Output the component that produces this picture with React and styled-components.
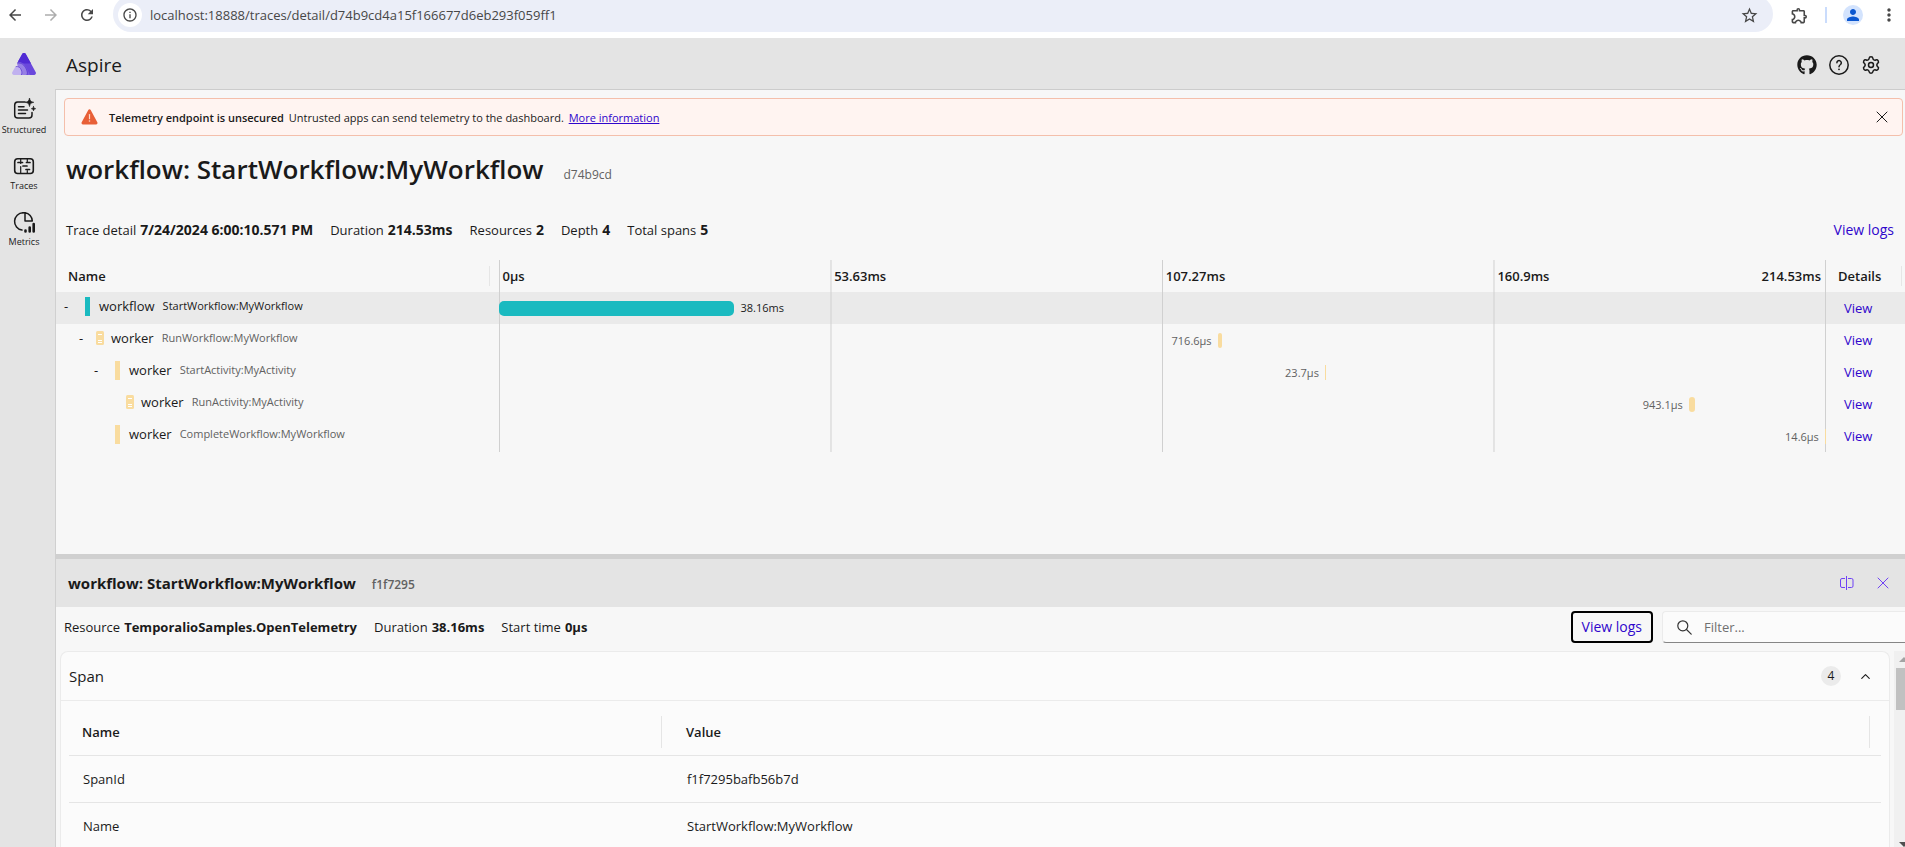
import React from "react";
import styled, { createGlobalStyle } from "styled-components";
import { MdArrowBack, MdArrowForward, MdRefresh, MdInfoOutline, MdStarOutline, MdOutlineExtension, MdPerson, MdMoreVert } from "react-icons/md";
import { FaGithub } from "react-icons/fa";
import { Settings, X, ChevronUp } from "lucide-react";

const color = {
  text: "#1a1a1a",
  muted: "#616161",
  link: "#2f06cc",
  chrome: "#e4e4e4",
  surface: "#f7f7f7",
  card: "#fbfbfb",
  line: "#d0d0d0",
  faint: "#e6e6e6",
  accent: "#6f42f5",
  teal: "#1abac0",
  sand: "#f9dc9f",
};

const GlobalStyle = createGlobalStyle`
  *, *::before, *::after { box-sizing: border-box; }
  body {
    margin: 0;
    color: ${color.text};
    font: 13px/20px "Open Sans", "Noto Sans", sans-serif;
  }
  a { color: ${color.link}; text-decoration: none; }
  button { padding: 0; border: 0; background: none; color: inherit; font: inherit; cursor: pointer; }
  svg { display: block; }
`;

const Page = styled.div`
  display: flex;
  flex-direction: column;
  height: 100vh;
  overflow: hidden;
`;

/* Browser toolbar */

const BrowserBar = styled.div`
  display: flex;
  flex: none;
  gap: 16px;
  height: 38px;
  padding: 0 6px 0 5px;
  overflow: hidden;
  background: #fff;
  color: #474747;
`;

const BrowserButton = styled.button`
  display: flex;
  align-items: center;
  justify-content: center;
  width: 20px;
  height: 30px;
  color: ${(p) => (p.disabled ? "#adadad" : "#474747")};
`;

const AddressBar = styled.div`
  display: flex;
  flex: 1;
  align-items: center;
  height: 36px;
  margin-top: -4px;
  padding: 2px 14px 0 5px;
  border-radius: 18px;
  background: #ebeef8;
`;

const SiteInfo = styled.button`
  display: flex;
  align-items: center;
  justify-content: center;
  width: 24px;
  height: 24px;
  border-radius: 50%;
  background: #fff;
`;

const AddressInput = styled.input`
  flex: 1;
  margin: 0 8px;
  padding: 0;
  border: 0;
  outline: 0;
  background: none;
  color: #474747;
  font: inherit;
`;

const BarDivider = styled.span`
  width: 2px;
  height: 16px;
  margin-top: 7px;
  background: #cadcfc;
`;

const Avatar = styled.button`
  display: flex;
  align-items: center;
  justify-content: center;
  width: 20px;
  height: 20px;
  margin-top: 5px;
  border-radius: 50%;
  background: #d3e3fd;
  color: #0b57d0;
`;

/* Application frame */

const AppFrame = styled.div`
  display: grid;
  flex: 1;
  grid-template: 51px minmax(0, 1fr) / 55px minmax(0, 1fr);
  min-height: 0;
  background: ${color.chrome};
`;

const LogoLink = styled.a`
  display: flex;
  align-items: center;
  justify-content: center;
  width: 48px;
`;

const AppHeader = styled.header`
  display: flex;
  align-items: center;
  justify-content: space-between;
  padding: 2px 24px 0 11px;
`;

const AppName = styled.span`
  font-size: 19px;
  line-height: 28px;
`;

const HeaderActions = styled.div`
  display: flex;
  gap: 12px;
`;

const IconButton = styled.button`
  display: flex;
  align-items: center;
  justify-content: center;
  width: 20px;
  height: 20px;
  color: ${(p) => (p.$accent ? color.accent : color.text)};
`;

const SideNav = styled.nav`
  width: 48px;
  padding-top: 9px;
`;

const NavItem = styled.a`
  display: flex;
  flex-direction: column;
  align-items: center;
  height: 56px;
  color: ${color.text};
  font-size: 9px;
  line-height: 15px;
`;

const Panels = styled.div`
  display: grid;
  grid-template-rows: minmax(0, 29fr) 5px minmax(0, 18fr);
  border-top: 1px solid #cccccc;
  border-left: 1px solid ${color.line};
  background: ${color.surface};
`;

const TracePanel = styled.main`
  overflow: hidden;
`;

/* Message bar */

const MessageBar = styled.div`
  display: flex;
  align-items: center;
  height: 38px;
  margin: 8px 2px 0 8px;
  padding: 0 10px 0 16px;
  border: 1px solid #f4bfab;
  border-radius: 4px;
  background: #fff4f1;
  font-size: 11px;
`;

const MessageText = styled.p`
  flex: 1;
  margin: 0 0 0 11px;
  padding-top: 2px;

  b { margin-right: 2px; font-weight: 600; }
  a { margin-left: 2px; text-decoration: underline; }
`;

/* Titles and summaries */

const TitleRow = styled.div`
  display: flex;
  align-items: baseline;
  gap: 20px;
  margin: 15px 10px 33px;
`;

const TraceTitle = styled.h1`
  margin: 0;
  font-size: 26px;
  font-weight: 600;
  line-height: 36px;
`;

const IdText = styled.span`
  color: ${color.muted};
  font-size: 12px;
  font-weight: ${(p) => (p.$strong ? 600 : 400)};
`;

const TraceSummary = styled.div`
  display: flex;
  justify-content: space-between;
  margin: 0 11px 20px 10px;
`;

const Facts = styled.dl`
  display: flex;
  gap: 17px;
  margin: 0;

  div { display: flex; align-items: baseline; gap: 4px; }
  dd { margin: 0; font-size: ${(p) => (p.$large ? 14 : 13)}px; font-weight: 700; }
`;

/* Trace table */

const TraceTable = styled.table`
  display: block;
  width: 100%;

  thead, tbody { display: block; }
`;

const TraceRow = styled.tr`
  display: grid;
  grid-template-columns: 2fr 6fr 79px;
  height: 32px;
  background: ${(p) => (p.$selected ? "#eaeaea" : "transparent")};
`;

const TraceHead = styled.th`
  display: flex;
  align-items: center;
  justify-content: space-between;
  padding: 0 ${(p) => (p.$last ? 3 : 9)}px 0 12px;
  font-weight: 600;
  text-align: left;

  &::after {
    width: 1px;
    height: 20px;
    background: ${color.faint};
    content: "";
  }
`;

const gridLines = `
  border-right: 1px solid ${color.line};
  background: linear-gradient(to right, ${color.line} 1px, transparent 1px) 0 0 / 25% 100%;
`;

const TickHead = styled.th`
  display: grid;
  grid-template-columns: repeat(4, 1fr);
  align-items: center;
  padding: 0;
  font-weight: 600;
  text-align: left;
  ${gridLines}
`;

const Tick = styled.span`
  display: flex;
  justify-content: space-between;
  padding: 0 4px;
`;

const NameCell = styled.td`
  display: flex;
  align-items: center;
  padding: 0 0 4px ${(p) => 8 + p.$depth * 15}px;
`;

const Toggle = styled.button`
  width: 6px;
  text-align: left;
`;

const TypeMark = styled.span`
  display: flex;
  justify-content: ${(p) => (p.$server ? "flex-end" : "flex-start")};
  width: ${(p) => (p.$server ? 19 : 14)}px;
  margin-left: ${(p) => (p.$server ? 0 : 15)}px;
  margin-right: ${(p) => (p.$server ? 7 : 0)}px;
`;

const ClientMark = styled.i`
  width: 5px;
  height: 19px;
  background: ${(p) => p.$color};
`;

const ResourceName = styled.span`
  margin-right: 8px;
`;

const SpanName = styled.span`
  color: ${(p) => (p.$selected ? color.text : color.muted)};
  font-size: 11px;
`;

const TimelineCell = styled.td`
  display: flex;
  align-items: center;
  padding: 0;
  ${gridLines}
`;

const Offset = styled.div`
  flex: none;
  text-align: right;
`;

const Bar = styled.div`
  flex: none;
  min-width: 1px;
  height: 15px;
  border-radius: ${(p) => (p.$thin ? 0 : 5)}px;
  background: ${(p) => p.$color};
`;

const DurationLabel = styled.span`
  padding: 0 6px;
  color: ${(p) => (p.$selected ? color.text : color.muted)};
  font-size: 11px;
`;

const DetailCell = styled.td`
  display: flex;
  align-items: center;
  padding: 0 0 0 18px;
`;

/* Span details */

const Splitter = styled.div`
  background: ${color.line};
`;

const DetailPanel = styled.section`
  display: flex;
  flex-direction: column;
  min-height: 0;
  overflow: hidden;
`;

const DetailHeader = styled.header`
  display: flex;
  flex: none;
  align-items: center;
  gap: 16px;
  height: 48px;
  padding: 0 12px;
  background: ${color.chrome};
`;

const DetailTitle = styled.div`
  display: flex;
  flex: 1;
  align-items: baseline;
  gap: 16px;
  padding-top: 2px;

  h2 { margin: 0; font-size: 15px; font-weight: 700; line-height: 20px; }
`;

const DetailToolbar = styled.div`
  display: flex;
  flex: none;
  align-items: center;
  gap: 9px;
  height: 44px;
  padding: 4px 0 8px 8px;

  dl { flex: 1; }
`;

const LogsLink = styled.a`
  font-size: 14px;
`;

const FocusedLogsLink = styled(LogsLink)`
  padding: 4px 9px;
  border: 2px solid #000;
  border-radius: 4px;
`;

const FilterBox = styled.label`
  display: flex;
  align-items: center;
  gap: 12px;
  width: 243px;
  height: 32px;
  padding-left: 14px;
  border: 1px solid #ebebeb;
  border-right: 0;
  border-bottom-color: #858585;
  border-radius: 4px 0 0 4px;
  background: ${color.card};

  input {
    flex: 1;
    min-width: 0;
    border: 0;
    outline: 0;
    padding: 0;
    background: none;
    font: inherit;
  }
  input::placeholder { color: #707070; opacity: 1; }
`;

const ScrollArea = styled.div`
  display: flex;
  flex: 1;
  min-height: 0;
  gap: 4px;
  padding-left: 4px;
`;

const Card = styled.div`
  flex: 1;
  overflow: hidden;
  border: 1px solid #ebebeb;
  border-bottom: 0;
  border-radius: 8px 8px 0 0;
  background: ${color.card};
`;

const CardHeader = styled.div`
  display: flex;
  align-items: center;
  height: 49px;
  padding: 0 14px 0 8px;
  border-bottom: 1px solid #ebebeb;

  h3 { flex: 1; margin: 0; font-size: 15px; font-weight: 500; }
`;

const Badge = styled.span`
  width: 20px;
  margin-right: 14px;
  border-radius: 10px;
  background: #ebebeb;
  font-size: 12px;
  text-align: center;
`;

const PropertyTable = styled.table`
  display: block;
  margin: 8px;

  thead, tbody { display: block; }
`;

const PropertyRow = styled.tr`
  display: grid;
  grid-template-columns: 1fr 2fr;
  align-items: center;
  height: 47px;
  border-bottom: 1px solid #e5e5e5;
`;

const PropertyHead = styled.th`
  padding: 6px 0 6px 13px;
  margin-right: 11px;
  border-right: 1px solid #e5e5e5;
  font-weight: 600;
  text-align: left;
`;

const PropertyCell = styled.td`
  padding: 0 14px;
`;

const Scrollbar = styled.div`
  display: flex;
  flex-direction: column;
  flex: none;
  width: 11px;
  padding: 6px 0 0 2px;
  overflow: hidden;
  background: #f0f0f0;
`;

const ScrollArrow = styled.span`
  display: block;
  width: 0;
  margin-left: 3px;
  border: 5px solid transparent;
  border-top: 0;
  border-bottom: 5px solid #a3a3a3;
  ${(p) => p.$down && "margin-top: auto; transform: rotate(180deg); border-bottom-color: #505050;"}
`;

const ScrollThumb = styled.span`
  height: 42px;
  margin-top: 6px;
  background: #c1c1c1;
`;

/* Drawings */

const AspireLogo = () => (
  <svg width="24" height="22" viewBox="0 0 24 22" aria-hidden="true">
    <path d="M10.2 1.1a2 2 0 0 1 3.6 0l9.8 17.8a2 2 0 0 1-1.8 3.1H12L6 8.6z" fill="#6a48dc" />
    <path d="M10.2 1.1a2 2 0 0 1 3.6 0L19 10.500H11L5 10.500z" fill="#512bd4" />
    <path d="M6 8.7C10 9 12.500 11 14 14l4 8h-6z" fill="#7b5de0" />
    <path d="M5 10.500c4-.6 6.500.5 8.500 4.500 1.500 3 2 7 .5 7H8z" fill="#9780e5" />
    <path d="M3.500 13.500c3-.5 4.500.8 5.500 3 1.200 2.700 1 5.500-.5 5.500H2.200a2 2 0 0 1-1.800-3.100z" fill="#c0b1ef" />
    <path d="M5.500 10c4-.2 6.500 1.600 8.500 5.500 1.400 2.800 2 4.500 1 6.500M3.800 13.500c2.800-.2 4.500 1 5.500 3.500.8 2 .8 3.500 0 5" fill="none" stroke="#5a36d2" strokeWidth=".7" />
  </svg>
);

const StructuredIcon = () => (
  <svg width="24" height="24" viewBox="0 0 24 24" fill="none" stroke="currentColor" strokeWidth="1.500" strokeLinecap="round" aria-hidden="true">
    <path d="M13 4H5.500A3 3 0 0 0 2.700 7v10a3 3 0 0 0 3 3H17a3 3 0 0 0 3-3v-2.500M6.500 8.700H12M6.500 12h9M6.500 15.500h7" />
    <path d="M17.500 0c.6 3 1.300 3.700 4.300 4.300-3 .6-3.700 1.300-4.300 4.300-.6-3-1.300-3.700-4.300-4.300 3-.6 3.700-1.300 4.300-4.300zM21.500 8.500c.3 1.500.7 1.800 2.200 2.200-1.500.3-1.900.7-2.200 2.200-.3-1.500-.7-1.900-2.200-2.200 1.500-.4 1.900-.7 2.200-2.200z" fill="currentColor" strokeWidth=".6" />
  </svg>
);

const TracesIcon = () => (
  <svg width="24" height="24" viewBox="0 0 24 24" fill="none" stroke="currentColor" strokeWidth="1.600" strokeLinecap="round" aria-hidden="true">
    <rect x="2.700" y="4.700" width="18.600" height="14.800" rx="3" />
    <path d="M8.700 5v4.500M8.700 12.500V19M15.300 5v2.500M15.300 16.500V19" strokeWidth="1.200" />
    <path d="M6 8.500h4.500M11 12h4M14.500 8.500H18M14 15.500h3.500" strokeWidth="1.700" />
  </svg>
);

const MetricsIcon = () => (
  <svg width="24" height="24" viewBox="0 0 24 24" fill="none" stroke="currentColor" strokeWidth="1.500" strokeLinecap="round" aria-hidden="true">
    <path d="M11 2.800a8.700 8.700 0 0 0-1 17.300M13 2.800V11h7.300A8.500 8.500 0 0 0 13 2.800z" strokeLinejoin="round" />
    <path d="M11 2.800h2" />
    <path d="M13.500 20.500v1M17.700 17.500v4M21.700 14v7.500" strokeWidth="2.600" />
  </svg>
);

const HelpIcon = () => (
  <svg width="20" height="20" viewBox="0 0 20 20" fill="none" stroke="currentColor" strokeWidth="1.500" strokeLinecap="round" aria-hidden="true">
    <circle cx="10" cy="10" r="9.200" />
    <path d="M7.900 7.800a2.200 2.200 0 1 1 3.600 1.700c-.9.700-1.500 1.200-1.500 2.200" />
    <circle cx="10" cy="14.300" r=".9" fill="currentColor" stroke="none" />
  </svg>
);

const WarningIcon = () => (
  <svg width="17" height="16" viewBox="0 0 17 16" aria-hidden="true">
    <path d="M7.300 1a1.400 1.400 0 0 1 2.400 0l6.600 12.300A1.400 1.400 0 0 1 15.100 15.400H1.900A1.400 1.400 0 0 1 .7 13.300z" fill="#e85f37" />
    <path d="M8.500 5.500v4.200" stroke="#fbd9cc" strokeWidth="1.200" strokeLinecap="round" />
    <circle cx="8.500" cy="12" r=".8" fill="#fbd9cc" />
  </svg>
);

const SplitIcon = () => (
  <svg width="14" height="14" viewBox="0 0 14 14" fill="none" stroke="currentColor" aria-hidden="true">
    <path d="M6.500 0v14M5 2.500H2A1.500 1.500 0 0 0 .5 4v6A1.500 1.500 0 0 0 2 11.500h3M8 2.500h3.500A1.500 1.500 0 0 1 13 4v6a1.500 1.500 0 0 1-1.500 1.500H8" />
  </svg>
);

const SearchIcon = () => (
  <svg width="15" height="15" viewBox="0 0 15 15" fill="none" stroke="#333" strokeWidth="1.200" strokeLinecap="round" aria-hidden="true">
    <circle cx="5.800" cy="5.800" r="5" />
    <path d="m9.500 9.500 4.700 4.700" />
  </svg>
);

const ServerIcon = ({ fill }) => (
  <svg width="8" height="14" viewBox="0 0 8 14" aria-hidden="true">
    <rect width="8" height="14" rx="1.500" fill={fill} />
    <path d="M2 3.500h4M2 9.500h4M2 11.500h4" stroke="#fff" />
  </svg>
);

/* Data */

const TOTAL = 214.53;
const ticks = ["0μs", "53.63ms", "107.27ms", "160.9ms"];

const spans = [
  { depth: 0, resource: "workflow", name: "StartWorkflow:MyWorkflow", start: 0, length: 38.16, label: "38.16ms", color: color.teal, toggle: true, selected: true },
  { depth: 1, resource: "worker", name: "RunWorkflow:MyWorkflow", start: 116.3, length: 0.7166, label: "716.6μs", color: color.sand, toggle: true, server: true },
  { depth: 2, resource: "worker", name: "StartActivity:MyActivity", start: 133.65, length: 0.0237, label: "23.7μs", color: color.sand, toggle: true },
  { depth: 3, resource: "worker", name: "RunActivity:MyActivity", start: 192.5, length: 0.9431, label: "943.1μs", color: color.sand, server: true },
  { depth: 2, resource: "worker", name: "CompleteWorkflow:MyWorkflow", start: 214.51, length: 0.0146, label: "14.6μs", color: color.sand },
];

const properties = [
  ["SpanId", "f1f7295bafb56b7d"],
  ["Name", "StartWorkflow:MyWorkflow"],
];

const percent = (value) => `${(value / TOTAL) * 100}%`;

function FactList({ items, large }) {
  return (
    <Facts $large={large}>
      {items.map(([term, value]) => (
        <div key={term}>
          <dt>{term}</dt>
          <dd>{value}</dd>
        </div>
      ))}
    </Facts>
  );
}

function SpanRow({ span }) {
  const labelFirst = span.start > TOTAL / 2;
  const label = <DurationLabel $selected={span.selected}>{span.label}</DurationLabel>;
  return (
    <TraceRow $selected={span.selected}>
      <NameCell $depth={span.depth}>
        <Toggle aria-label={span.toggle ? undefined : "No child spans"} disabled={!span.toggle}>
          {span.toggle ? "-" : ""}
        </Toggle>
        <TypeMark $server={span.server}>
          {span.server ? <ServerIcon fill={span.color} /> : <ClientMark $color={span.color} />}
        </TypeMark>
        <ResourceName>{span.resource}</ResourceName>
        <SpanName $selected={span.selected}>{span.name}</SpanName>
      </NameCell>
      <TimelineCell>
        <Offset style={{ width: percent(span.start) }}>{labelFirst && label}</Offset>
        <Bar $color={span.color} $thin={span.length < 0.1} style={{ width: percent(span.length) }} />
        {!labelFirst && label}
      </TimelineCell>
      <DetailCell>
        <a href="#span">View</a>
      </DetailCell>
    </TraceRow>
  );
}

export default function App() {
  return (
    <Page>
      <GlobalStyle />
      <BrowserBar>
        <BrowserButton aria-label="Back"><MdArrowBack size={18} /></BrowserButton>
        <BrowserButton aria-label="Forward" disabled><MdArrowForward size={18} /></BrowserButton>
        <BrowserButton aria-label="Reload"><MdRefresh size={18} /></BrowserButton>
        <AddressBar>
          <SiteInfo aria-label="Site information"><MdInfoOutline size={16} /></SiteInfo>
          <AddressInput aria-label="Address" defaultValue="localhost:18888/traces/detail/d74b9cd4a15f166677d6eb293f059ff1" />
          <BrowserButton aria-label="Bookmark"><MdStarOutline size={19} /></BrowserButton>
        </AddressBar>
        <BrowserButton aria-label="Extensions"><MdOutlineExtension size={19} /></BrowserButton>
        <BarDivider />
        <Avatar aria-label="Profile"><MdPerson size={18} /></Avatar>
        <BrowserButton aria-label="Menu"><MdMoreVert size={20} /></BrowserButton>
      </BrowserBar>

      <AppFrame>
        <LogoLink href="#home" aria-label="Home"><AspireLogo /></LogoLink>
        <AppHeader>
          <AppName>Aspire</AppName>
          <HeaderActions>
            <IconButton aria-label="GitHub"><FaGithub size={20} /></IconButton>
            <IconButton aria-label="Help"><HelpIcon /></IconButton>
            <IconButton aria-label="Settings"><Settings size={22} strokeWidth={1.8} /></IconButton>
          </HeaderActions>
        </AppHeader>

        <SideNav>
          <NavItem href="#structured"><StructuredIcon />Structured</NavItem>
          <NavItem href="#traces"><TracesIcon />Traces</NavItem>
          <NavItem href="#metrics"><MetricsIcon />Metrics</NavItem>
        </SideNav>

        <Panels>
          <TracePanel>
            <MessageBar>
              <WarningIcon />
              <MessageText>
                <b>Telemetry endpoint is unsecured</b> Untrusted apps can send telemetry to the dashboard.{" "}
                <a href="#more">More information</a>
              </MessageText>
              <IconButton aria-label="Dismiss"><X size={20} strokeWidth={1.2} /></IconButton>
            </MessageBar>

            <TitleRow>
              <TraceTitle>workflow: StartWorkflow:MyWorkflow</TraceTitle>
              <IdText>d74b9cd</IdText>
            </TitleRow>

            <TraceSummary>
              <FactList
                large
                items={[
                  ["Trace detail", "7/24/2024 6:00:10.571 PM"],
                  ["Duration", "214.53ms"],
                  ["Resources", "2"],
                  ["Depth", "4"],
                  ["Total spans", "5"],
                ]}
              />
              <LogsLink href="#logs">View logs</LogsLink>
            </TraceSummary>

            <TraceTable>
              <thead>
                <TraceRow>
                  <TraceHead>Name</TraceHead>
                  <TickHead>
                    {ticks.map((tick, i) => (
                      <Tick key={tick}>
                        <span>{tick}</span>
                        {i === ticks.length - 1 && <span>214.53ms</span>}
                      </Tick>
                    ))}
                  </TickHead>
                  <TraceHead $last>Details</TraceHead>
                </TraceRow>
              </thead>
              <tbody>
                {spans.map((span) => (
                  <SpanRow key={span.name} span={span} />
                ))}
              </tbody>
            </TraceTable>
          </TracePanel>

          <Splitter />

          <DetailPanel>
            <DetailHeader>
              <DetailTitle>
                <h2>workflow: StartWorkflow:MyWorkflow</h2>
                <IdText $strong>f1f7295</IdText>
              </DetailTitle>
              <IconButton $accent aria-label="Split vertically"><SplitIcon /></IconButton>
              <IconButton $accent aria-label="Close"><X size={20} strokeWidth={1.2} /></IconButton>
            </DetailHeader>

            <DetailToolbar>
              <FactList
                items={[
                  ["Resource", "TemporalioSamples.OpenTelemetry"],
                  ["Duration", "38.16ms"],
                  ["Start time", "0μs"],
                ]}
              />
              <FocusedLogsLink href="#span-logs">View logs</FocusedLogsLink>
              <FilterBox>
                <SearchIcon />
                <input type="search" placeholder="Filter..." aria-label="Filter" />
              </FilterBox>
            </DetailToolbar>

            <ScrollArea>
              <Card>
                <CardHeader>
                  <h3>Span</h3>
                  <Badge>4</Badge>
                  <IconButton aria-label="Collapse"><ChevronUp size={15} strokeWidth={1.8} /></IconButton>
                </CardHeader>
                <PropertyTable>
                  <thead>
                    <PropertyRow>
                      <PropertyHead>Name</PropertyHead>
                      <PropertyHead>Value</PropertyHead>
                    </PropertyRow>
                  </thead>
                  <tbody>
                    {properties.map(([name, value]) => (
                      <PropertyRow key={name}>
                        <PropertyCell>{name}</PropertyCell>
                        <PropertyCell>{value}</PropertyCell>
                      </PropertyRow>
                    ))}
                  </tbody>
                </PropertyTable>
              </Card>
              <Scrollbar aria-hidden="true">
                <ScrollArrow />
                <ScrollThumb />
                <ScrollArrow $down />
              </Scrollbar>
            </ScrollArea>
          </DetailPanel>
        </Panels>
      </AppFrame>
    </Page>
  );
}
